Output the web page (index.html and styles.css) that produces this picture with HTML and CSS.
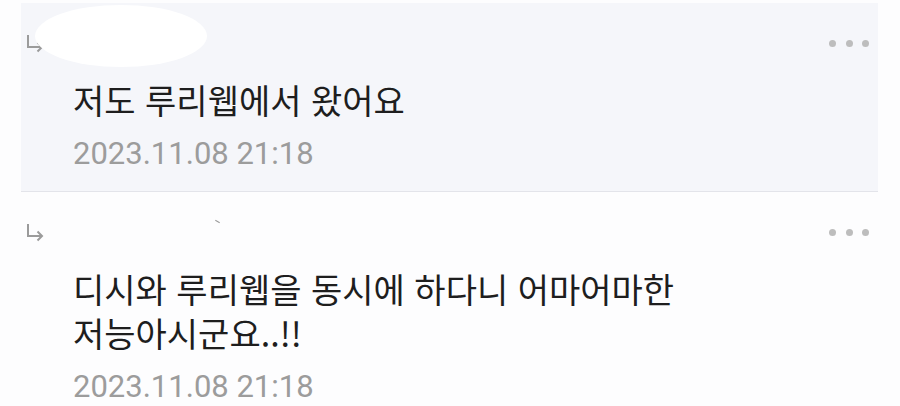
FILE: index.html
```html
<!DOCTYPE html>
<html lang="ko">
<head>
  <meta charset="UTF-8" />
  <meta name="viewport" content="width=device-width, initial-scale=1.0"/>
  <title>댓글</title>
  <link rel="stylesheet" href="styles.css">
</head>
<body>
  <div class="comments">

    <!-- ===== [답글 1] ===== -->
    <div class="reply reply-mine">
      <div class="reply-head">
        <svg class="reply-arrow" width="18" height="19" viewBox="0 0 18 19">
          <path d="M2 1v12h14M11.5 8.5L16 13l-4.5 4.5" fill="none" stroke="#9b9b9b" stroke-width="2"/>
        </svg>
        <span class="nick"><span class="nick-mark"></span></span>
        <span class="reply-blot"></span>
        <span class="more"><i></i><i></i><i></i></span>
      </div>
      <p class="reply-text">저도 루리웹에서 왔어요</p>
      <div class="reply-date">2023.11.08 21:18</div>
    </div>

    <!-- ===== [답글 2] ===== -->
    <div class="reply">
      <div class="reply-head">
        <svg class="reply-arrow" width="18" height="19" viewBox="0 0 18 19">
          <path d="M2 1v12h14M11.5 8.5L16 13l-4.5 4.5" fill="none" stroke="#9b9b9b" stroke-width="2"/>
        </svg>
        <span class="nick"><span class="nick-mark nick-mark-light"></span></span>
        <span class="more"><i></i><i></i><i></i></span>
      </div>
      <p class="reply-text">
        <span class="line">디시와 루리웹을 동시에 하다니 어마어마한</span>
        <span class="line">저능아시군요..!!</span>
      </p>
      <div class="reply-date">2023.11.08 21:18</div>
    </div>

  </div>
</body>
</html>
```

FILE: styles.css
```css
/* ===== 기본 ===== */
body {
  margin: 0;
  background: #fdfdfe;
  font-family: "Noto Sans CJK KR", Roboto, sans-serif;
  overflow: hidden;
}

.comments {
  margin: 3px 22px 0 21px;
}

/* ===== 답글 ===== */
.reply {
  position: relative;
  padding: 25px 9px 0 5px;
}

.reply-mine {
  background: #f5f6fa;
  border-bottom: 1px solid #e3e4ea;
  padding-bottom: 15px;
}

.reply-head {
  display: flex;
  align-items: center;
  height: 30px;
}

.reply-arrow {
  flex-shrink: 0;
  margin-right: 29px;
}

.nick {
  position: relative;
  flex: 1;
  height: 30px;
}

/* 닉네임 지운 자국 */
.nick-mark {
  position: absolute;
  left: 10px;
  top: 21px;
  width: 8px;
  height: 2px;
  background: #222;
  transform: rotate(-25deg);
}

.nick-mark-light {
  left: 142px;
  top: 4px;
  width: 5px;
  height: 1px;
  background: #999;
  transform: rotate(30deg);
}

.reply-blot {
  position: absolute;
  left: 14px;
  top: 2px;
  width: 172px;
  height: 62px;
  border-radius: 50%;
  background: #fff;
}

/* 더보기 점 3개 */
.more {
  display: flex;
  gap: 9.5px;
}

.more i {
  width: 7px;
  height: 7px;
  border-radius: 50%;
  background: #bdbdbd;
}

.reply-text {
  margin: 20px 0 0 47px;
  font-size: 34px;
  line-height: 44px;
  color: #1e1e1e;
}

.reply-text .line {
  display: block;
  height: 44px;
}

.reply-date {
  margin: 10px 0 0 47px;
  font-family: Roboto, sans-serif;
  font-size: 31px;
  line-height: 44px;
  color: #9c9c9c;
}
```
